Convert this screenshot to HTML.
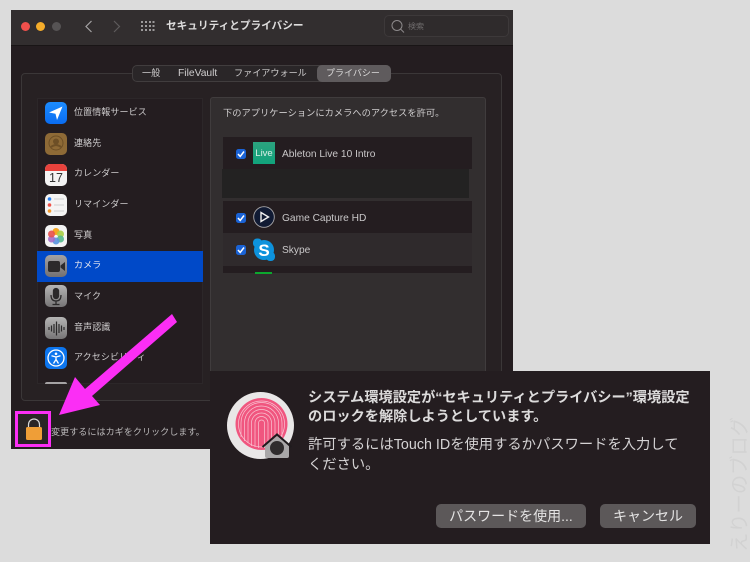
<!DOCTYPE html>
<html lang="ja"><head><meta charset="utf-8">
<style>
*{box-sizing:border-box;margin:0;padding:0}
html,body{width:750px;height:562px;overflow:hidden;background:#dcdcdc}
body{position:relative;font-family:"Liberation Sans","Noto Sans CJK JP",sans-serif;color:#d0cecf}
.a{position:absolute}
.t{position:absolute;white-space:nowrap;line-height:1}
.ic{position:absolute;left:45px;width:22px;height:22px;border-radius:5px;overflow:hidden}
.lbl{position:absolute;left:74px;font-size:9px;color:#cfcdce;white-space:nowrap;line-height:12px;letter-spacing:.1px}
.cb{position:absolute;left:236px;width:10px;height:10px;border-radius:2.5px;background:#1a63d6}
.cb svg{display:block}
.app{position:absolute;left:282px;font-size:10.2px;color:#c9c7c8;white-space:nowrap;line-height:12px}
.btn{position:absolute;height:24px;top:504px;background:#5c5859;border-radius:5px;color:#e4e3e3;font-size:14px;font-weight:400;text-align:center;line-height:24px;white-space:nowrap}
</style></head><body>
<!-- window -->
<div class="a" style="left:11px;top:10px;width:502px;height:439px;background:#241d20"></div>
<div class="a" style="left:11px;top:10px;width:502px;height:36px;background:#322e2f;border-bottom:1px solid #191516"></div>
<div class="a" style="left:21px;top:22px;width:9px;height:9px;border-radius:50%;background:#f0504c"></div>
<div class="a" style="left:36px;top:22px;width:9px;height:9px;border-radius:50%;background:#f5ac2a"></div>
<div class="a" style="left:52px;top:22px;width:9px;height:9px;border-radius:50%;background:#565354"></div>
<svg class="a" style="left:80px;top:18px" width="45" height="17" fill="none" stroke-width="1.2"><path d="M11.5 3 L6 8.5 L11.5 14" stroke="#a5a3a4"/><path d="M34 3 L39.500 8.500 L34 14" stroke="#5e5b5c"/></svg>
<svg class="a" style="left:140px;top:20px" width="15" height="13" fill="#9c9a9b"><g><rect x="1" y="1" width="2" height="2"/><rect x="5" y="1" width="2" height="2"/><rect x="9" y="1" width="2" height="2"/><rect x="12.500" y="1" width="2" height="2"/><rect x="1" y="5" width="2" height="2"/><rect x="5" y="5" width="2" height="2"/><rect x="9" y="5" width="2" height="2"/><rect x="12.500" y="5" width="2" height="2"/><rect x="1" y="9" width="2" height="2"/><rect x="5" y="9" width="2" height="2"/><rect x="9" y="9" width="2" height="2"/><rect x="12.500" y="9" width="2" height="2"/></g></svg>
<div class="t" style="left:166px;top:21px;font-size:10.650px;font-weight:700;color:#dddcdc">セキュリティとプライバシー</div>
<div class="a" style="left:384px;top:15px;width:125px;height:22px;border:1px solid #3d393a;border-radius:5px;background:#2f2b2c"></div>
<svg class="a" style="left:390px;top:19px" width="16" height="16" fill="none" stroke="#8d8a8b" stroke-width="1"><circle cx="7" cy="6.500" r="5"/><path d="M10.500 10 L14 13.500"/></svg>
<div class="t" style="left:408px;top:23px;font-size:8px;color:#6f6c6d">検索</div>

<!-- outer panel -->
<div class="a" style="left:21px;top:73px;width:481px;height:328px;border:1px solid #3b3738;border-radius:4px;background:#272123"></div>
<div class="a" style="left:132px;top:65px;width:259px;height:17px;border:1px solid #413d3e;border-radius:5px;background:#2a2628"></div>
<div class="a" style="left:317px;top:65px;width:74px;height:17px;border-radius:5px;background:#5f5b5d"></div>
<div class="t" style="left:142px;top:69px;font-size:9.100px;color:#cfcdce">一般</div>
<div class="t" style="left:178px;top:69px;font-size:10.300px;color:#cfcdce">FileVault</div>
<div class="t" style="left:234px;top:69px;font-size:9.100px;color:#cfcdce">ファイアウォール</div>
<div class="t" style="left:326px;top:69px;font-size:9px;color:#dcdbdb">プライバシー</div>

<!-- list -->
<div class="a" style="left:37px;top:98px;width:166px;height:286px;background:#241d20;border:1px solid #2c2729"></div>
<div class="a" style="left:37px;top:251px;width:166px;height:31px;background:#0049c8"></div>

<div class="ic" style="top:102px;background:linear-gradient(#1c8cff,#0a6cf0)"><svg width="22" height="22"><path d="M17.500 4.500 L4 10.500 L10.500 11.800 L12 18 Z" fill="#fff"/></svg></div>
<div class="lbl" style="top:106px">位置情報サービス</div>
<div class="ic" style="top:133px;background:#8e6a36"><svg width="22" height="22" fill="none" stroke="#6d4f26"><circle cx="11" cy="10" r="7"/><circle cx="11" cy="8.500" r="2.500" fill="#6d4f26"/><path d="M6 14 Q11 10 16 14" stroke-width="2"/></svg></div>
<div class="lbl" style="top:137px">連絡先</div>
<div class="ic" style="top:164px;background:#f4f3f3"><div class="a" style="left:0;top:0;width:22px;height:7px;background:#e8423c"></div><div class="t" style="left:0;width:22px;text-align:center;top:8px;font-size:12.500px;color:#333">17</div></div>
<div class="lbl" style="top:167px">カレンダー</div>
<div class="ic" style="top:194px;background:#f5f4f4"><svg width="22" height="22"><circle cx="4.500" cy="5" r="1.800" fill="#2c82f0"/><circle cx="4.500" cy="11" r="1.800" fill="#ee5148"/><circle cx="4.500" cy="17" r="1.800" fill="#f59a2c"/><path d="M9 5h10M9 11h10M9 17h10" stroke="#cfcfcf"/></svg></div>
<div class="lbl" style="top:198px">リマインダー</div>
<div class="ic" style="top:225px;background:#f4f3f3"><svg width="22" height="22"><circle cx="11" cy="6.500" r="3.500" fill="#f5a623"/><circle cx="15.500" cy="9" r="3.500" fill="#a9cf45" opacity=".9"/><circle cx="15.500" cy="14" r="3.500" fill="#55b98c" opacity=".9"/><circle cx="11" cy="16" r="3.500" fill="#5a93de" opacity=".9"/><circle cx="6.500" cy="14" r="3.500" fill="#a56cc8" opacity=".9"/><circle cx="6.500" cy="9" r="3.500" fill="#e8504e" opacity=".9"/></svg></div>
<div class="lbl" style="top:229px">写真</div>
<div class="ic" style="top:255px;background:linear-gradient(#a3a1a2,#737172)"><svg width="22" height="22"><rect x="3" y="6" width="12" height="11" rx="2" fill="#2c2a2b"/><path d="M15.500 10.500 L20 7 V16 L15.500 12.500 Z" fill="#2c2a2b"/></svg></div>
<div class="lbl" style="top:259px;color:#e9e9ef">カメラ</div>
<div class="ic" style="top:285px;background:linear-gradient(#b5b4b4,#777576)"><svg width="22" height="22" fill="none" stroke="#2b292a" stroke-width="1.300"><rect x="8.500" y="3.500" width="5" height="10" rx="2.500" fill="#2b292a"/><path d="M6 10 Q6 16 11 16 Q16 16 16 10M11 16V19M7.500 19.500H14.500"/></svg></div>
<div class="lbl" style="top:290px">マイク</div>
<div class="ic" style="top:317px;background:linear-gradient(#b5b4b4,#777576)"><svg width="22" height="22" stroke="#2b292a" stroke-width="1.200"><path d="M4 10v3M6.500 8.500v6M9 7v9M11.500 4.500v14M14 7v9M16.500 8.500v6M19 10v3"/></svg></div>
<div class="lbl" style="top:321px">音声認識</div>
<div class="ic" style="top:347px;background:#0c75ee"><svg width="22" height="22" fill="none" stroke="#fff"><circle cx="11" cy="11" r="8" stroke-width="1.300"/><circle cx="11" cy="6.800" r="1.300" fill="#fff" stroke="none"/><path d="M6.500 8.800 L11 10 L15.500 8.800 M11 10 V12.500 L8.500 16.500 M11 12.500 L13.500 16.500" stroke-width="1.300"/></svg></div>
<div class="lbl" style="top:351px">アクセシビリティ</div>
<div class="a" style="left:45px;top:382px;width:22px;height:2px;background:#a5a3a4;border-radius:2px 2px 0 0"></div>

<!-- right panel -->
<div class="a" style="left:210px;top:97px;width:276px;height:290px;border:1px solid #403c3d;border-radius:3px;background:#322e2f"></div>
<div class="t" style="left:223px;top:109px;font-size:9.250px;color:#d0cecf">下のアプリケーションにカメラへのアクセスを許可。</div>
<div class="a" style="left:223px;top:137px;width:249px;height:32px;background:#241d20"></div>
<div class="a" style="left:222px;top:169px;width:247px;height:29px;background:#232222"></div>
<div class="a" style="left:223px;top:201px;width:249px;height:32px;background:#241d20"></div>
<div class="a" style="left:223px;top:233px;width:249px;height:33px;background:#2f2a2c"></div>
<div class="a" style="left:223px;top:266px;width:249px;height:7px;background:#241d20"></div>
<div class="a" style="left:255px;top:272px;width:17px;height:1.500px;background:#0ca82e"></div>

<div class="cb" style="top:149px"><svg width="10" height="10" fill="none" stroke="#fff" stroke-width="1.500"><path d="M2 5 L4.200 7.500 L8 2.500"/></svg></div>
<div class="cb" style="top:213px"><svg width="10" height="10" fill="none" stroke="#fff" stroke-width="1.500"><path d="M2 5 L4.200 7.500 L8 2.500"/></svg></div>
<div class="cb" style="top:245px"><svg width="10" height="10" fill="none" stroke="#fff" stroke-width="1.500"><path d="M2 5 L4.200 7.500 L8 2.500"/></svg></div>

<div class="a" style="left:253px;top:142px;width:22px;height:22px;background:linear-gradient(#2ca37f,#11a37c)"></div>
<div class="t" style="left:253px;top:149px;width:22px;text-align:center;font-size:9.500px;color:#d6efe6">Live</div>
<div class="app" style="top:149px">Ableton Live 10 Intro</div>
<svg class="a" style="left:253px;top:206px" width="22" height="22"><circle cx="11" cy="11" r="10.300" fill="#101a33" stroke="#a9a8ab" stroke-width=".9"/><path d="M8 6.500 L15.500 11 L8 15.500 Z" fill="none" stroke="#f0f0f0" stroke-width="1.400"/></svg>
<div class="app" style="top:213px">Game Capture HD</div>
<svg class="a" style="left:252px;top:238px" width="24" height="24"><rect x="1" y="0.500" width="9" height="9" rx="4" fill="#0d92dc"/><rect x="14" y="14" width="9" height="9" rx="4" fill="#0d92dc"/><circle cx="12" cy="12" r="10" fill="#0d92dc"/></svg>
<div class="t" style="left:252px;top:242px;width:24px;text-align:center;font-size:17px;font-weight:700;color:#fff">S</div>
<div class="app" style="top:245px">Skype</div>

<!-- bottom -->
<div class="t" style="left:51px;top:428px;font-size:9.100px;color:#b9b7b8">変更するにはカギをクリックします。</div>
<div class="a" style="left:15px;top:411px;width:36px;height:36px;border:3px solid #fb2ef5;background:#2a2526"></div>
<svg class="a" style="left:24px;top:417px" width="20" height="24"><path d="M4.500 11 V7.500 A5.500 5.500 0 0 1 15.500 7.500 V11" fill="none" stroke="#d8d8d8" stroke-width="1.200"/><rect x="2" y="10" width="16" height="13" rx="1.500" fill="#ef9e37"/></svg>
<svg class="a" style="left:0;top:0" width="200" height="430"><path d="M172 314 L177 322 L92 396 L100 405 L59 415 L75 377 L85 389 Z" fill="#fb2ef5"/></svg>

<!-- dialog -->
<div class="a" style="left:210px;top:371px;width:500px;height:173px;background:#241d20"></div>
<svg class="a" style="left:226px;top:391px" width="72" height="72">
<circle cx="34.500" cy="34.500" r="33.500" fill="#e9e7e7"/>
<circle cx="35.500" cy="33" r="26" fill="#f0567f"/>
<g fill="none" stroke="#f9c6d4" stroke-width=".7"><circle cx="35.500" cy="33" r="23"/><path d="M15 46 V32 A20.500 20.500 0 0 1 56 32 V46"/><path d="M18.500 50 V32 A17 17 0 0 1 52.500 32 V50"/><path d="M22 52 V32 A13.500 13.500 0 0 1 49 32 V52"/><path d="M25.500 55 V32 A10 10 0 0 1 45.500 32 V55"/><path d="M29 56 V32 A6.500 6.500 0 0 1 42 32 V56"/><path d="M32.500 57 V32 A3 3 0 0 1 38.500 32 V57"/></g>
<path d="M39 55 L51 45 L63 55 V65 Q63 67 61 67 H41 Q39 67 39 65 Z" fill="#a9a7a8"/>
<path d="M36.500 56 L51 43.500 L65.500 56" fill="none" stroke="#1f1b1d" stroke-width="2"/>
<circle cx="51" cy="57" r="7" fill="#2f2c2d"/>
</svg>
<div class="t" style="left:308px;top:391px;font-size:14.200px;font-weight:700;color:#dcdbdb">システム環境設定が“セキュリティとプライバシー”環境設定</div>
<div class="t" style="left:308px;top:410px;font-size:14.200px;font-weight:700;color:#dcdbdb">のロックを解除しようとしています。</div>
<div class="t" style="left:308px;top:438px;font-size:14.300px;color:#d5d3d4">許可するにはTouch IDを使用するかパスワードを入力して</div>
<div class="t" style="left:308px;top:458px;font-size:14.300px;color:#d5d3d4">ください。</div>
<div class="btn" style="left:436px;width:150px">パスワードを使用...</div>
<div class="btn" style="left:600px;width:96px">キャンセル</div>

<!-- watermark -->
<div class="t" style="left:672px;top:479px;width:132px;height:14px;transform:rotate(-90deg);font-size:19.300px;font-weight:400;color:#d2d2d2;transform-origin:center">えりーのブログ</div>
</body></html>
